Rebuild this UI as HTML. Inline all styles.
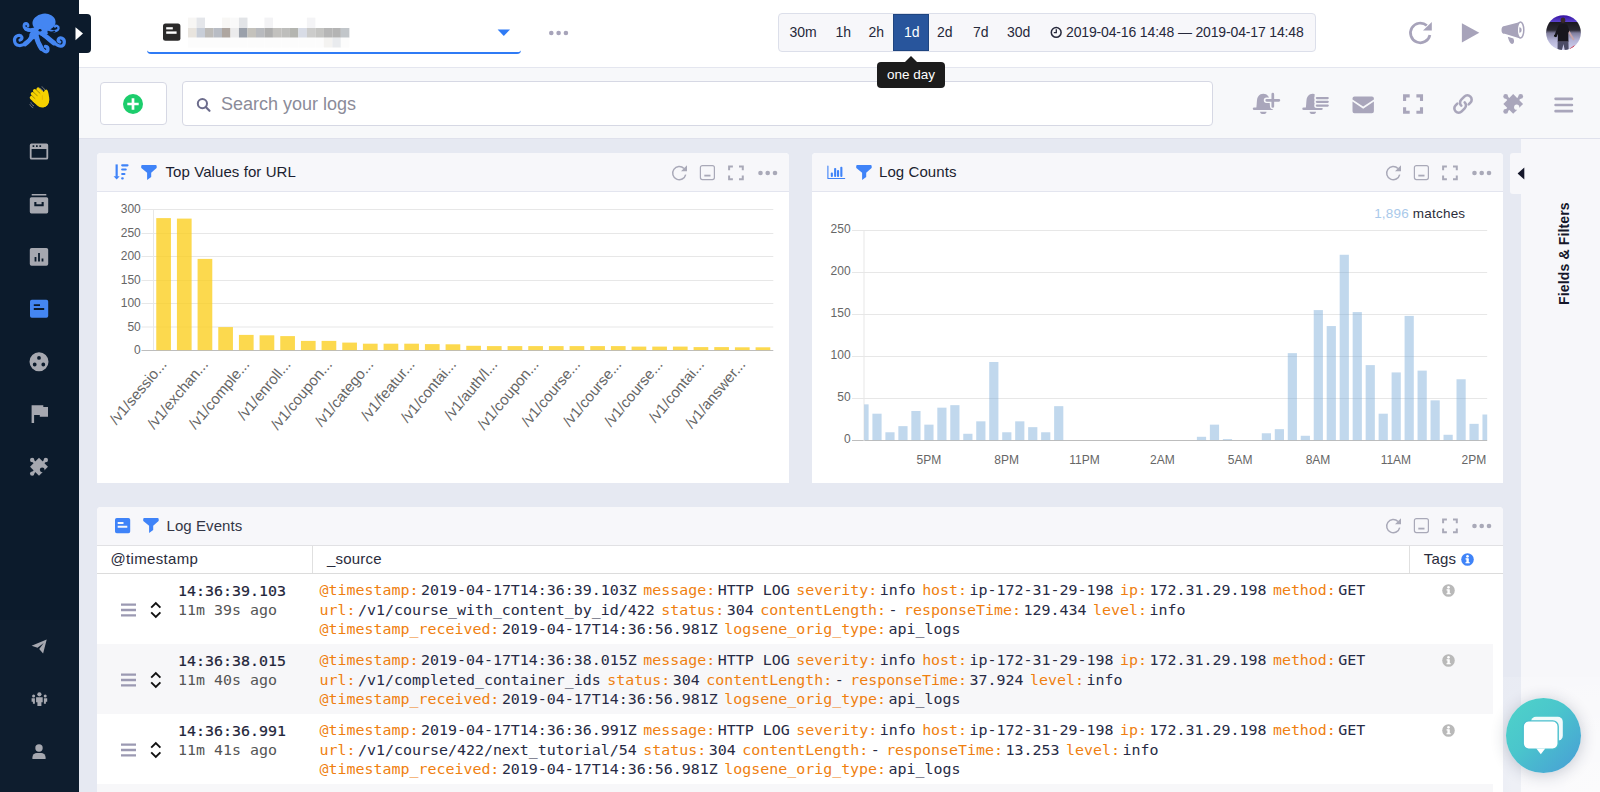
<!DOCTYPE html>
<html lang="en">
<head>
<meta charset="utf-8">
<title>Logs</title>
<style>
*{box-sizing:border-box;margin:0;padding:0}
html,body{width:1600px;height:792px;overflow:hidden}
body{font-family:"Liberation Sans",sans-serif;background:#e6e9f2;color:#1f2233;position:relative}
.abs{position:absolute}
#sidebar{position:absolute;left:0;top:0;width:79px;height:792px;background:#0c1b2c}
#sidetab{z-index:3;position:absolute;left:79px;top:14px;width:12px;height:39px;background:#0c1b2c;border-radius:0 4px 4px 0}
#header{position:absolute;left:79px;top:0;width:1521px;height:68px;background:#fff;border-bottom:1px solid #e4e6ef}
#toolbar{position:absolute;left:79px;top:68px;width:1521px;height:71px;background:#f7f8fa;border-bottom:1px solid #dfe1ec}
.panel{position:absolute;background:#fff;border-radius:4px 4px 0 0;overflow:hidden}
.phead{position:absolute;left:0;top:0;right:0;height:39px;background:#f7f7fa;border-bottom:1px solid #e3e5ef}
.ptitle{position:absolute;top:11px;font-size:15px;line-height:17px;letter-spacing:.08px;color:#1b1e30;white-space:nowrap}
svg{position:absolute;overflow:visible}
.tp{position:absolute;top:24px;font-size:14px;line-height:16px;color:#26283a;white-space:nowrap}
.mono{font-family:"DejaVu Sans Mono","Liberation Mono",monospace;font-size:14.95px;line-height:19.5px;white-space:nowrap}
.k{color:#ef7f10;margin-right:2.5px}
.v{color:#272b45;margin-right:6.5px}
.row{position:absolute;left:0;width:1396px}
.src{position:absolute;left:222.5px;top:7px}
.ts1{position:absolute;left:81px;top:7.500px;color:#23253a;-webkit-text-stroke:.2px #23253a}
.ts2{position:absolute;left:81px;top:26.500px;color:#555}
.th{font-size:15px;line-height:17px;letter-spacing:.2px;color:#2a2c3c;white-space:nowrap}
</style>
</head>
<body>
<div id="sidebar"><div style="position:absolute;left:0;top:620px;width:79px;height:172px;background:rgba(255,255,255,.012)"></div></div>
<div id="sidetab"></div>
<svg width="79" height="792" viewBox="0 0 79 792" style="left:0;top:0">
<!-- octopus logo -->
<g fill="none" stroke="#4486f2" stroke-linecap="round" stroke-linejoin="round">
<ellipse cx="44" cy="22.5" rx="11.6" ry="8.8" fill="#4486f2" stroke="none" transform="rotate(-8 44 22.5)"/>
<path d="M39 28 L33.500 35" stroke-width="8"/><path d="M33 35C31 39 28 42 25 44" stroke-width="4.600"/><path d="M36 35C37 40 39 45 41.500 48.500" stroke-width="4.800"/><path d="M41 33C46 36 50 40 54 43" stroke-width="4.800"/><path d="M34 29.500C31 30.500 28 30 26 29" stroke-width="3.800"/>
<path d="M42 30 L46 32" stroke-width="5"/>
<path d="M33 34 C30 40 25 46 19 45.5 C13.5 45 13 37 18 35.5 C22 34.5 23.5 39 20 40" stroke-width="3.2"/>
<path d="M33 30 C29 31 23.5 29 24 25.5 C24.5 22.5 28.5 23 28 26" stroke-width="2.8"/>
<path d="M35.5 35 C37.5 42 41 49.5 45 51.5 C48.5 53 49 47 45.5 46.5" stroke-width="3.4"/>
<path d="M41 33.5 C48 37.5 54 44.5 59.5 46 C65 47 66 39.5 61.5 38 C58 37 57 41 59.8 42" stroke-width="3.2"/>
<path d="M49 30 C52 32 57.5 32 58.5 28.5 C59 26 56 25 55 26.5" stroke-width="2.4"/>
</g>
<ellipse cx="40" cy="30.3" rx="1.5" ry="1.2" fill="#0c1b2c"/>
<path d="M47.5 31.5 C50 33 53.5 32.5 55 31" stroke="#0c1b2c" stroke-width="1.6" fill="none"/>
<!-- wave hand -->
<g transform="translate(39.800 97.800)">
<g transform="rotate(-46)">
<rect x="-7.400" y="-7.800" width="3.400" height="9" rx="1.700" fill="#f6d100"/>
<rect x="-3.800" y="-9.800" width="3.400" height="11" rx="1.700" fill="#f6d100"/>
<rect x="-.200" y="-10.300" width="3.400" height="11" rx="1.700" fill="#f6d100"/>
<rect x="3.400" y="-9" width="3.400" height="10" rx="1.700" fill="#f6d100"/>
<path d="M-7.400-3H6.800V3.500A7.100 7.100 0 0 1-7.400 3.500Z" fill="#f6d100"/>
<path d="M-3.900-8v6M-.300-8.500v6M3.300-8v6" stroke="#c9a600" stroke-width=".5"/>
</g>
<path d="M3-1.500C4-5.500 4.500-8.300 6.400-8.300 8.300-8.300 8.900-4 9.400 0 9.900 5 7 9 3 9.800Z" fill="#f6d100"/>
<path d="M2.600-2.500L2.600 2" stroke="#e0a800" stroke-width=".6"/>
<path d="M-.500-9.500C1.200-9.300 2.500-8 3-6.800M1.800-11C3.300-10.500 4.400-9.200 4.800-7.800" stroke="#7f8288" stroke-width=".9" fill="none"/>
<path d="M-9 4.500C-8.500 6.300-7.200 7.600-5.800 8.100M-10 6.500C-9.300 8.200-8 9.400-6.600 9.900" stroke="#7f8288" stroke-width=".9" fill="none"/>
</g>
<!-- window -->
<g fill="#a6a8b0">
<path fill-rule="evenodd" d="M31.5 143.5h15a1.7 1.7 0 0 1 1.7 1.7v12.7a1.7 1.7 0 0 1-1.7 1.7h-15a1.7 1.7 0 0 1-1.7-1.7v-12.7a1.7 1.7 0 0 1 1.7-1.7zM31.6 149v8.8h14.8V149zM32.6 145.2v1.7h1.7v-1.7zm3.4 0v1.7h1.7v-1.7zm3.4 0v1.7h1.7v-1.7z"/>
<!-- archive -->
<rect x="31.6" y="194" width="14.8" height="1.6" rx=".5"/>
<path fill-rule="evenodd" d="M31.4 197.2h15.2a1.6 1.6 0 0 1 1.6 1.6v13a1.6 1.6 0 0 1-1.6 1.6H31.4a1.6 1.6 0 0 1-1.6-1.6v-13a1.6 1.6 0 0 1 1.6-1.6zM34.3 202v4.3h9.4V202h-2.1v2.2h-5.2V202z"/>
<!-- chart -->
<path fill-rule="evenodd" d="M31.6 248h14.8a1.8 1.8 0 0 1 1.8 1.8v14.2a1.8 1.8 0 0 1-1.8 1.8H31.6a1.8 1.8 0 0 1-1.8-1.8v-14.2a1.8 1.8 0 0 1 1.8-1.8zM34.6 257v4.6h1.8V257zm3.5-4v8.6h1.8V253zm3.5 5.6v3h1.8v-3z"/>
<!-- palette -->
<path fill-rule="evenodd" d="M39 352.3a9.5 9.5 0 1 1 0 19a9.5 9.5 0 0 1 0-19zM39 356a1.9 1.9 0 1 0 0 3.8a1.9 1.9 0 0 0 0-3.8zm-4.3 6.6a1.9 1.9 0 1 0 0 3.8a1.9 1.9 0 0 0 0-3.8zm8.6 0a1.9 1.9 0 1 0 0 3.8a1.9 1.9 0 0 0 0-3.8z"/>
<!-- flag -->
<path d="M31.6 405.2h2.5v17.8h-2.5zM34.1 405.2h9.2l-.0 1.8h4.7v9.8h-8.2v-1.8h-5.7z"/>
<!-- puzzle -->
<g transform="translate(39 466.800) scale(.91)"><path d="M0-9.850L9.850 0 0 9.850-9.850 0z" fill="#a6a8b0"/><g stroke="#a6a8b0" stroke-width="2.800" fill="#a6a8b0"><path d="M-7.400-7.400L-4-4M7.400-7.400L4-4M-7.400 7.400L-4 4"/></g><circle cx="-7.500" cy="-7.500" r="2.400" fill="#a6a8b0"/><circle cx="7.500" cy="-7.500" r="2.400" fill="#a6a8b0"/><circle cx="-7.500" cy="7.500" r="2.400" fill="#a6a8b0"/><circle cx="3.500" cy="3.300" r="2.600" fill="#0c1b2c"/><path d="M3.800 3.600L7 6.800" stroke="#0c1b2c" stroke-width="2.600"/></g>
<!-- paper plane -->
<path d="M46.700 639.500l-3.600 13.900-3.900-4.300 4.500-6.200-6.200 4.800-5.900-1.900z"/>
<!-- team -->
<g>
<circle cx="39.4" cy="694.3" r="2.100"/>
<path d="M36.100 697.300h6.600v5h-1.300v3.700h-4v-3.700h-1.300z"/>
<circle cx="33.600" cy="696" r="1.500"/>
<path d="M31.600 698.300h3.300v5.500h-2v-2h-1.300z"/>
<circle cx="45.200" cy="696" r="1.500"/>
<path d="M43.900 698.300h3.300v3.500h-1.300v2h-2z"/>
</g>
<!-- user -->
<circle cx="39" cy="748" r="3.700"/>
<path d="M32.400 759v-1.500a4.500 4.500 0 0 1 4.500-4.500h4.200a4.500 4.500 0 0 1 4.500 4.500v1.500z"/>
</g>
<!-- logs active -->
<path fill="#4486f2" fill-rule="evenodd" d="M31.800 299.800h14.600a1.800 1.800 0 0 1 1.800 1.800v14.300a1.800 1.800 0 0 1-1.800 1.800H31.800a1.800 1.800 0 0 1-1.800-1.800v-14.300a1.800 1.800 0 0 1 1.800-1.800zM33.800 304.200v1.800h6.200v-1.800zm0 3.900v1.800h10.400v-1.800z"/>
<!-- side tab arrow -->
</svg>
<svg width="12" height="16" viewBox="0 0 12 16" style="left:75px;top:26px;z-index:4"><path d="M.5 1.200L8 7.600.5 14.200z" fill="#fff"/></svg>

<div id="header"></div>
<div id="toolbar"></div>

<!-- app select -->
<div class="abs" style="left:147px;top:14.500px;width:374px;height:39px;border-bottom:2px solid #2f7bf5;border-radius:0 0 4px 4px"></div>
<svg width="18" height="18" viewBox="0 0 18 18" style="left:163px;top:23px"><rect x="0" y="0.400" width="17.400" height="17.400" rx="2.500" fill="#2b2a2a"/><rect x="3.200" y="4.200" width="6.600" height="2.200" fill="#fff"/><rect x="3.200" y="8.400" width="10.400" height="2.400" fill="#fff"/></svg>
<svg width="164" height="32" viewBox="0 0 164 32" style="left:188px;top:17px" >
<g id="blur"><rect x="0.00" y="11" width="8.54" height="9.700" fill="#e8e4de"/><rect x="8.49" y="11" width="8.54" height="9.700" fill="#c8ced8"/><rect x="16.98" y="11" width="8.54" height="9.700" fill="#bdbbb8"/><rect x="25.47" y="11" width="8.54" height="9.700" fill="#b8bcc4"/><rect x="33.96" y="11" width="8.54" height="9.700" fill="#aea6a0"/><rect x="42.45" y="11" width="8.54" height="9.700" fill="#ebebec"/><rect x="50.94" y="11" width="8.54" height="9.700" fill="#9aa0aa"/><rect x="59.43" y="11" width="8.54" height="9.700" fill="#c4c2bc"/><rect x="67.92" y="11" width="8.54" height="9.700" fill="#b8babe"/><rect x="76.41" y="11" width="8.54" height="9.700" fill="#aeaeae"/><rect x="84.90" y="11" width="8.54" height="9.700" fill="#c2c1be"/><rect x="93.39" y="11" width="8.54" height="9.700" fill="#bebebc"/><rect x="101.88" y="11" width="8.54" height="9.700" fill="#b4b5b0"/><rect x="110.37" y="11" width="8.54" height="9.700" fill="#d8dce6"/><rect x="118.86" y="11" width="8.54" height="9.700" fill="#cccccb"/><rect x="127.35" y="11" width="8.54" height="9.700" fill="#c4c4c2"/><rect x="135.84" y="11" width="8.54" height="9.700" fill="#b6b6b6"/><rect x="144.33" y="11" width="8.54" height="9.700" fill="#b4b4b4"/><rect x="152.82" y="11" width="8.54" height="9.700" fill="#c2c6ca"/><rect x="0.00" y="0.600" width="8.54" height="10.400" fill="#f7f6f4"/><rect x="8.49" y="0.600" width="8.54" height="10.400" fill="#e4e6ea"/><rect x="33.96" y="0.600" width="8.54" height="10.400" fill="#f8f7f5"/><rect x="42.45" y="0.600" width="8.54" height="10.400" fill="#f9f9f9"/><rect x="50.94" y="0.600" width="8.54" height="10.400" fill="#e2e4e7"/><rect x="76.41" y="0.600" width="8.54" height="10.400" fill="#f3f3f5"/><rect x="118.86" y="0.600" width="8.54" height="10.400" fill="#f4f4f6"/><rect x="0.00" y="20.700" width="8.54" height="9.800" fill="#fcfcfc"/><rect x="8.49" y="20.700" width="8.54" height="9.800" fill="#fcfcfc"/><rect x="16.98" y="20.700" width="8.54" height="9.800" fill="#fcfcfc"/><rect x="25.47" y="20.700" width="8.54" height="9.800" fill="#fcfcfc"/><rect x="33.96" y="20.700" width="8.54" height="9.800" fill="#fcfcfc"/><rect x="42.45" y="20.700" width="8.54" height="9.800" fill="#fcfcfc"/><rect x="50.94" y="20.700" width="8.54" height="9.800" fill="#fcfcfc"/><rect x="59.43" y="20.700" width="8.54" height="9.800" fill="#fcfcfc"/><rect x="67.92" y="20.700" width="8.54" height="9.800" fill="#fcfcfc"/><rect x="76.41" y="20.700" width="8.54" height="9.800" fill="#fcfcfc"/><rect x="84.90" y="20.700" width="8.54" height="9.800" fill="#fcfcfc"/><rect x="93.39" y="20.700" width="8.54" height="9.800" fill="#fcfcfc"/><rect x="101.88" y="20.700" width="8.54" height="9.800" fill="#fcfcfc"/><rect x="110.37" y="20.700" width="8.54" height="9.800" fill="#fcfcfc"/><rect x="118.86" y="20.700" width="8.54" height="9.800" fill="#fcfcfc"/><rect x="127.35" y="20.700" width="8.54" height="9.800" fill="#fcfcfc"/><rect x="135.84" y="20.700" width="8.54" height="9.800" fill="#f4f3f1"/><rect x="144.33" y="20.700" width="8.54" height="9.800" fill="#e9ebee"/><rect x="152.82" y="20.700" width="8.54" height="9.800" fill="#fcfcfc"/></g>
</svg>
<svg width="14" height="8" viewBox="0 0 14 8" style="left:497px;top:29px"><path d="M.6.600h12.400L6.800 7z" fill="#2f7bf5"/></svg>
<svg width="22" height="6" viewBox="0 0 22 6" style="left:548px;top:30px"><circle cx="3.300" cy="3" r="2.300" fill="#a7a4ba"/><circle cx="10.600" cy="3" r="2.300" fill="#a7a4ba"/><circle cx="17.900" cy="3" r="2.300" fill="#a7a4ba"/></svg>
<!-- time picker -->
<div class="abs" style="left:778px;top:13px;width:538px;height:39px;background:#f7f7fa;border:1px solid #dcdfea;border-radius:4px"></div>
<div class="abs" style="left:893px;top:14px;width:36px;height:37px;background:#28559c;border:1px solid #1f4580"></div>
<div class="tp" style="left:789.500px">30m</div>
<div class="tp" style="left:835.500px">1h</div>
<div class="tp" style="left:868.500px">2h</div>
<div class="tp" style="left:904px;color:#fff">1d</div>
<div class="tp" style="left:937px">2d</div>
<div class="tp" style="left:973px">7d</div>
<div class="tp" style="left:1007px">30d</div>
<svg width="13" height="13" viewBox="0 0 13 13" style="left:1050px;top:25.500px"><circle cx="6.200" cy="6.400" r="4.900" fill="none" stroke="#26283a" stroke-width="1.500"/><path d="M6.300 3.300v3.400H3.800" fill="none" stroke="#26283a" stroke-width="1.300"/></svg>
<div class="tp" style="left:1066px;letter-spacing:-.15px">2019-04-16 14:48 — 2019-04-17 14:48</div>
<!-- tooltip -->
<svg width="14" height="7" viewBox="0 0 14 7" style="left:904px;top:56px"><path d="M0 7L7 0l7 7z" fill="#1c1c1c"/></svg>
<div class="abs" style="left:877px;top:62px;width:68px;height:26px;background:#1c1c1c;border-radius:4px;color:#fff;font-size:13.500px;line-height:26px;text-align:center;z-index:5">one day</div>
<!-- header right icons -->
<svg width="26" height="26" viewBox="0 0 26 26" style="left:1408px;top:20px"><path d="M18.800 5.600A9.800 9.800 0 1 0 21.900 14.900" fill="none" stroke="#a7a3ba" stroke-width="2.700"/><path d="M23.800 2v8.600H15z" fill="#a7a3ba"/></svg>
<svg width="20" height="22" viewBox="0 0 20 22" style="left:1461px;top:22px"><path d="M.900 1.200L18.300 10.700.900 20.600z" fill="#a7a3ba"/></svg>
<svg width="26" height="26" viewBox="0 0 26 26" style="left:1500px;top:20px"><path d="M4.700 6L20.200 1.900V18.500L4.700 13.800A3.200 3.900 0 0 1 4.700 6z" fill="#a7a3ba"/><ellipse cx="20.500" cy="10" rx="3.300" ry="8" fill="#fff" stroke="#a7a3ba" stroke-width="1.500"/><path d="M19.300 7.300A2.300 2.700 0 0 1 19.300 12.700z" fill="#a7a3ba"/><path d="M7.800 16.700L13.400 18.600C14.500 21 14.300 23.500 12.300 23.900 10.200 24.200 8.600 20.200 7.800 16.700z" fill="#a7a3ba"/></svg>
<!-- avatar -->
<svg width="36" height="36" viewBox="0 0 36 36" style="left:1545.800px;top:15px">
<defs><clipPath id="avc"><circle cx="17.500" cy="17.600" r="17.400"/></clipPath>
<linearGradient id="avg" x1="0" y1="0" x2="0" y2="1"><stop offset="0" stop-color="#3410a0"/><stop offset=".19" stop-color="#5b42cc"/><stop offset=".205" stop-color="#1b1920"/><stop offset=".42" stop-color="#2a2833"/><stop offset=".5" stop-color="#7f7d9c"/><stop offset=".7" stop-color="#b4b3d6"/><stop offset="1" stop-color="#d6d6f2"/></linearGradient></defs>
<g clip-path="url(#avc)"><rect width="36" height="36" fill="url(#avg)"/>
<path d="M23.600 33.800l5.300-3.800-2.600 4.600z" fill="#d02030"/>
<ellipse cx="17" cy="5.300" rx="2.300" ry="2.700" fill="#3a2a2a"/>
<path d="M21.500 16.500l1.800-1 5.200 9-1.400 1z" fill="#c9a3a6"/>
<path d="M13 9.800c2.500-1 6-1 8.200 0l2.300 6-1.300 2.200.3 8.700H11.700l.3-8-1.500 3.300-2.200-1 1.600-4.500z" fill="#18161d"/>
<path d="M11.700 26.500h10.700l.3 9h-3.900l-1.300-6.500-1.700 6.500h-4.300z" fill="#4c4c66"/>
<path d="M8.300 19.700l2.300 1-.6 1.500-2.200-.9z" fill="#111"/>
</g></svg>



<!-- toolbar -->
<div class="abs" style="left:100px;top:82px;width:67px;height:43px;background:#fff;border:1px solid #d6d8e4;border-radius:4px"></div>
<svg width="22" height="22" viewBox="0 0 22 22" style="left:122.300px;top:93px"><circle cx="11" cy="11" r="10" fill="#1ccd6c"/><path d="M11 5.300v11.400M5.300 11h11.400" stroke="#fff" stroke-width="2.700"/></svg>
<div class="abs" style="left:182px;top:81px;width:1030.500px;height:45px;background:#fff;border:1px solid #d6d8e4;border-radius:4px"></div>
<svg width="16" height="16" viewBox="0 0 16 16" style="left:195.700px;top:96.800px"><circle cx="6.400" cy="6.600" r="4.600" fill="none" stroke="#6c6c8c" stroke-width="2"/><path d="M9.700 10l3.800 3.800" stroke="#6c6c8c" stroke-width="2.200" stroke-linecap="round"/></svg>
<div class="abs" style="left:221px;top:94px;font-size:18px;line-height:21px;color:#8b8b99;white-space:nowrap">Search your logs</div>
<!-- bell plus -->
<svg width="30" height="22" viewBox="0 0 30 22" style="left:1252px;top:93px"><path d="M4.3 15C5.1 11 4.5 6 6.0 3.800C7.5 1.300 9.5 .700 11.3 .700C13.1 .700 15.1 1.300 16.6 3.800C18.1 6 17.5 11 18.3 15z" fill="#a9a6bb"/><rect x="0.8" y="14.400" width="20.400" height="2.600" rx="1.300" fill="#a9a6bb"/><path d="M8.1 18.700h6.400a3.200 2.400 0 0 1-6.400 0z" fill="#a9a6bb"/><path d="M20.800 1v12.600M14.500 7.300h12.600" stroke="#f7f8fa" stroke-width="5.400" stroke-linecap="round"/><path d="M20.800 1.200v12.200M14.700 7.300h12.200" stroke="#a9a6bb" stroke-width="2.700" stroke-linecap="round"/></svg>
<!-- bell lines -->
<svg width="30" height="22" viewBox="0 0 30 22" style="left:1302px;top:93px"><path d="M3.8 15C4.6 11 4.0 6 5.5 3.800C7.0 1.300 9.0 .700 10.8 .700C12.6 .700 14.6 1.300 16.1 3.800C17.6 6 17.0 11 17.8 15z" fill="#a9a6bb"/><rect x="0.3" y="14.400" width="20.400" height="2.600" rx="1.300" fill="#a9a6bb"/><path d="M7.6 18.700h6.400a3.200 2.400 0 0 1-6.400 0z" fill="#a9a6bb"/><rect x="12.600" y="0" width="16" height="14.300" fill="#f7f8fa"/><path d="M14.900 5.100h10.800M14.900 8.800h10.800M14.900 12.600h10.800" stroke="#f7f8fa" stroke-width="5" stroke-linecap="round"/><path d="M14.900 5.100h10.800M14.900 8.800h10.800M14.900 12.600h10.800" stroke="#a9a6bb" stroke-width="2.300" stroke-linecap="round"/></svg>
<!-- envelope -->
<svg width="24" height="18" viewBox="0 0 24 18" style="left:1351.500px;top:96px"><path d="M2.500.600h17.400a2 2 0 0 1 2 2v.8l-10.700 7.200L.5 3.400v-.8a2 2 0 0 1 2-2z" fill="#a9a6bb"/><path d="M.5 5.600l10.700 7.100 10.700-7.100v9.700a2 2 0 0 1-2 2H2.500a2 2 0 0 1-2-2z" fill="#a9a6bb"/></svg>
<!-- expand -->
<svg width="22" height="22" viewBox="0 0 22 22" style="left:1402px;top:93px"><path d="M2.600 8V2.900h5.100M14.400 2.900h5.100V8M19.500 14.200v5.100h-5.100M7.700 19.300H2.600v-5.100" fill="none" stroke="#a9a6bb" stroke-width="3.100"/></svg>
<!-- link -->
<svg width="22" height="22" viewBox="0 0 22 22" style="left:1452px;top:93px"><g fill="none" stroke="#a9a6bb" stroke-width="2.600" stroke-linecap="round"><path d="M9.300 12.700a4.300 4.300 0 0 1 0-6.100l3-3a4.300 4.300 0 0 1 6.100 6.100l-1.700 1.700"/><path d="M12.700 9.300a4.300 4.300 0 0 1 0 6.100l-3 3a4.300 4.300 0 0 1-6.100-6.100l1.700-1.700"/></g></svg>
<!-- puzzle -->
<svg width="24" height="24" viewBox="0 0 24 24" style="left:1501px;top:92px"><g transform="translate(12.200 11.900)"><path d="M0-9.850L9.850 0 0 9.850-9.850 0z" fill="#a9a6bb"/><g stroke="#a9a6bb" stroke-width="2.800" fill="#a9a6bb"><path d="M-7.400-7.400L-4-4M7.400-7.400L4-4M-7.400 7.400L-4 4"/></g><circle cx="-7.500" cy="-7.500" r="2.400" fill="#a9a6bb"/><circle cx="7.500" cy="-7.500" r="2.400" fill="#a9a6bb"/><circle cx="-7.500" cy="7.500" r="2.400" fill="#a9a6bb"/><circle cx="3.500" cy="3.300" r="2.600" fill="#f7f8fa"/><path d="M3.800 3.600L7 6.800" stroke="#f7f8fa" stroke-width="2.600"/></g></svg>
<!-- hamburger -->
<svg width="20" height="16" viewBox="0 0 20 16" style="left:1553.500px;top:96.500px"><path d="M1.600 1.800h16.300M1.600 8h16.300M1.600 14.200h16.300" stroke="#a9a6bb" stroke-width="2.700" stroke-linecap="round"/></svg>

<div class="panel" id="p1" style="left:97px;top:153px;width:692px;height:330px"><div class="phead"></div></div>
<div class="panel" id="p2" style="left:812px;top:153px;width:691px;height:330px"><div class="phead"></div></div>
<div class="panel" id="p3" style="left:97px;top:507px;width:1406px;height:300px"><div class="phead" style="border-bottom-color:#e1e1e4"></div></div>
<div id="rightpanel" class="abs" style="left:1521px;top:139px;width:79px;height:653px;background:#f7f7fa"></div>
<div id="righttab" class="abs" style="left:1510px;top:152.500px;width:12px;height:41px;background:#f7f7fa;border-radius:3px 0 0 3px"></div>
<svg width="17" height="17" viewBox="0 0 17 17" style="left:113px;top:163.300px"><path d="M3.650 1.400v12.400" stroke="#3f83f8" stroke-width="2.200"/><path d="M.600 13.200h6.100l-3.050 3.200z" fill="#3f83f8"/><path d="M9.200 2.300h5.300M9.200 6.500h3.500M9.200 11h2.200M9.200 15.400h.5" stroke="#3f83f8" stroke-width="2.200" stroke-linecap="round"/></svg><svg width="16" height="16" viewBox="0 0 16 16" style="left:141px;top:165px"><path d="M1.3 .1H14.6a1.1 1.1 0 0 1 1.1 1.1V2.4a1.2 1.2 0 0 1-.4 .8L10.2 7.8V12L6.1 15.1V7.8L.6 3.2A1.2 1.2 0 0 1 .2 2.4V1.2A1.1 1.1 0 0 1 1.3 .1z" fill="#3f83f8"/></svg><div class="ptitle abs" style="left:165.500px;top:163.400px">Top Values for URL</div><svg width="108" height="18" viewBox="0 0 108 18" style="left:671px;top:163.5px">
<path d="M13 4.500A6.600 6.600 0 1 0 14.700 10.600" fill="none" stroke="#a9a9b8" stroke-width="1.500"/><path d="M16 1.200v6h-6z" fill="#a9a9b8"/>
<rect x="29.400" y="1.600" width="14" height="14" rx="2" fill="none" stroke="#a9a9b8" stroke-width="1.200"/><path d="M33.300 11.600h6.200" stroke="#a9a9b8" stroke-width="1.800"/>
<path d="M58.100 6.200V2.400h3.800M68 2.400h3.800v3.800M71.800 11.500v3.800H68M61.900 15.300h-3.800v-3.800" fill="none" stroke="#a9a9b8" stroke-width="2"/>
<circle cx="89.500" cy="9" r="2.300" fill="#a9a9b8"/><circle cx="96.700" cy="9" r="2.300" fill="#a9a9b8"/><circle cx="104" cy="9" r="2.300" fill="#a9a9b8"/>
</svg><svg width="19" height="15" viewBox="0 0 19 15" style="left:827px;top:165px"><path d="M.9 1V13.5H17.7" fill="none" stroke="#3f83f8" stroke-width="1.1" stroke-linecap="round" stroke-linejoin="round"/><g fill="#3f83f8"><rect x="3.800" y="7.600" width="2.100" height="4.400" rx=".9"/><rect x="7.100" y="2.900" width="2.100" height="9.100" rx=".9"/><rect x="10" y="5.100" width="2.100" height="6.900" rx=".9"/><rect x="13.300" y="1.800" width="2.100" height="10.200" rx=".9"/></g></svg><svg width="16" height="16" viewBox="0 0 16 16" style="left:856px;top:165px"><path d="M1.3 .1H14.6a1.1 1.1 0 0 1 1.1 1.1V2.4a1.2 1.2 0 0 1-.4 .8L10.2 7.8V12L6.1 15.1V7.8L.6 3.2A1.2 1.2 0 0 1 .2 2.4V1.2A1.1 1.1 0 0 1 1.3 .1z" fill="#3f83f8"/></svg><div class="ptitle abs" style="left:879px;top:163.400px">Log Counts</div><svg width="108" height="18" viewBox="0 0 108 18" style="left:1385px;top:163.5px">
<path d="M13 4.500A6.600 6.600 0 1 0 14.700 10.600" fill="none" stroke="#a9a9b8" stroke-width="1.500"/><path d="M16 1.200v6h-6z" fill="#a9a9b8"/>
<rect x="29.400" y="1.600" width="14" height="14" rx="2" fill="none" stroke="#a9a9b8" stroke-width="1.200"/><path d="M33.300 11.600h6.200" stroke="#a9a9b8" stroke-width="1.800"/>
<path d="M58.100 6.200V2.400h3.800M68 2.400h3.800v3.800M71.800 11.500v3.800H68M61.900 15.300h-3.800v-3.800" fill="none" stroke="#a9a9b8" stroke-width="2"/>
<circle cx="89.500" cy="9" r="2.300" fill="#a9a9b8"/><circle cx="96.700" cy="9" r="2.300" fill="#a9a9b8"/><circle cx="104" cy="9" r="2.300" fill="#a9a9b8"/>
</svg><svg width="16" height="16" viewBox="0 0 16 16" style="left:114.800px;top:517.800px"><path fill-rule="evenodd" fill="#3f83f8" d="M1.800 0h11.600a1.800 1.800 0 0 1 1.800 1.800v11.600a1.800 1.800 0 0 1-1.800 1.800H1.800a1.800 1.800 0 0 1-1.800-1.800V1.800A1.800 1.800 0 0 1 1.800 0zM2.700 3.900v2h5.800v-2zm0 3.800v2h9.600v-2z"/></svg><svg width="16" height="16" viewBox="0 0 16 16" style="left:143px;top:518px"><path d="M1.3 .1H14.6a1.1 1.1 0 0 1 1.1 1.1V2.4a1.2 1.2 0 0 1-.4 .8L10.2 7.8V12L6.1 15.1V7.8L.6 3.2A1.2 1.2 0 0 1 .2 2.4V1.2A1.1 1.1 0 0 1 1.3 .1z" fill="#3f83f8"/></svg><div class="ptitle abs" style="left:166.500px;top:517px;color:#333646">Log Events</div><svg width="108" height="18" viewBox="0 0 108 18" style="left:1385px;top:517.2px">
<path d="M13 4.500A6.600 6.600 0 1 0 14.700 10.600" fill="none" stroke="#a9a9b8" stroke-width="1.500"/><path d="M16 1.200v6h-6z" fill="#a9a9b8"/>
<rect x="29.400" y="1.600" width="14" height="14" rx="2" fill="none" stroke="#a9a9b8" stroke-width="1.200"/><path d="M33.300 11.600h6.200" stroke="#a9a9b8" stroke-width="1.800"/>
<path d="M58.100 6.200V2.400h3.800M68 2.400h3.800v3.800M71.800 11.500v3.800H68M61.900 15.300h-3.800v-3.800" fill="none" stroke="#a9a9b8" stroke-width="2"/>
<circle cx="89.500" cy="9" r="2.300" fill="#a9a9b8"/><circle cx="96.700" cy="9" r="2.300" fill="#a9a9b8"/><circle cx="104" cy="9" r="2.300" fill="#a9a9b8"/>
</svg><svg width="8" height="13" viewBox="0 0 8 13" style="left:1517px;top:166.500px"><path d="M7.300.400v12L.600 6.400z" fill="#15172a"/></svg>
<div class="abs" style="left:1554.300px;top:204.600px;width:20px;height:100px"><div style="position:absolute;left:0;top:100px;width:100px;height:20px;transform-origin:0 0;transform:rotate(-90deg);font-size:14px;font-weight:700;letter-spacing:.15px;line-height:20px;color:#15172a;white-space:nowrap;text-align:left">Fields &amp; Filters</div></div>

<svg width="1600" height="500" viewBox="0 0 1600 500" style="left:0;top:0" font-family="Liberation Sans, sans-serif">
<path d="M141.500 209.5H773.300" stroke="#e7e7e7" stroke-width="1"/><text x="140.800" y="213.1" font-size="12" fill="#666" text-anchor="end">300</text><path d="M141.500 233.5H773.300" stroke="#e7e7e7" stroke-width="1"/><text x="140.800" y="237.1" font-size="12" fill="#666" text-anchor="end">250</text><path d="M141.500 256.5H773.300" stroke="#e7e7e7" stroke-width="1"/><text x="140.800" y="260.1" font-size="12" fill="#666" text-anchor="end">200</text><path d="M141.500 280.5H773.300" stroke="#e7e7e7" stroke-width="1"/><text x="140.800" y="284.1" font-size="12" fill="#666" text-anchor="end">150</text><path d="M141.500 303.5H773.300" stroke="#e7e7e7" stroke-width="1"/><text x="140.800" y="307.1" font-size="12" fill="#666" text-anchor="end">100</text><path d="M141.500 327.0H773.300" stroke="#e7e7e7" stroke-width="1"/><text x="140.800" y="330.6" font-size="12" fill="#666" text-anchor="end">50</text><path d="M141.500 350.5H773.300" stroke="#bdbdbd" stroke-width="1"/><text x="140.800" y="354.1" font-size="12" fill="#666" text-anchor="end">0</text><path d="M153.500 209V350" stroke="#e7e7e7" stroke-width="1"/>
<rect x="156.25" y="218.10" width="14.700" height="132.00" fill="rgba(251,207,34,.8)"/><rect x="176.92" y="218.60" width="14.700" height="131.50" fill="rgba(251,207,34,.8)"/><rect x="197.58" y="258.90" width="14.700" height="91.20" fill="rgba(251,207,34,.8)"/><rect x="218.25" y="327.10" width="14.700" height="23.00" fill="rgba(251,207,34,.8)"/><rect x="238.92" y="334.90" width="14.700" height="15.20" fill="rgba(251,207,34,.8)"/><rect x="259.58" y="335.30" width="14.700" height="14.80" fill="rgba(251,207,34,.8)"/><rect x="280.25" y="336.10" width="14.700" height="14.00" fill="rgba(251,207,34,.8)"/><rect x="300.92" y="340.90" width="14.700" height="9.20" fill="rgba(251,207,34,.8)"/><rect x="321.58" y="340.90" width="14.700" height="9.20" fill="rgba(251,207,34,.8)"/><rect x="342.25" y="342.60" width="14.700" height="7.50" fill="rgba(251,207,34,.8)"/><rect x="362.92" y="343.70" width="14.700" height="6.40" fill="rgba(251,207,34,.8)"/><rect x="383.58" y="343.70" width="14.700" height="6.40" fill="rgba(251,207,34,.8)"/><rect x="404.25" y="343.70" width="14.700" height="6.40" fill="rgba(251,207,34,.8)"/><rect x="424.92" y="344.10" width="14.700" height="6.00" fill="rgba(251,207,34,.8)"/><rect x="445.58" y="344.30" width="14.700" height="5.80" fill="rgba(251,207,34,.8)"/><rect x="466.25" y="345.80" width="14.700" height="4.30" fill="rgba(251,207,34,.8)"/><rect x="486.92" y="346.10" width="14.700" height="4.00" fill="rgba(251,207,34,.8)"/><rect x="507.58" y="346.10" width="14.700" height="4.00" fill="rgba(251,207,34,.8)"/><rect x="528.25" y="346.10" width="14.700" height="4.00" fill="rgba(251,207,34,.8)"/><rect x="548.92" y="346.10" width="14.700" height="4.00" fill="rgba(251,207,34,.8)"/><rect x="569.58" y="346.10" width="14.700" height="4.00" fill="rgba(251,207,34,.8)"/><rect x="590.25" y="346.10" width="14.700" height="4.00" fill="rgba(251,207,34,.8)"/><rect x="610.92" y="346.10" width="14.700" height="4.00" fill="rgba(251,207,34,.8)"/><rect x="631.58" y="346.60" width="14.700" height="3.50" fill="rgba(251,207,34,.8)"/><rect x="652.25" y="346.60" width="14.700" height="3.50" fill="rgba(251,207,34,.8)"/><rect x="672.92" y="346.60" width="14.700" height="3.50" fill="rgba(251,207,34,.8)"/><rect x="693.58" y="347.10" width="14.700" height="3.00" fill="rgba(251,207,34,.8)"/><rect x="714.25" y="347.10" width="14.700" height="3.00" fill="rgba(251,207,34,.8)"/><rect x="734.92" y="347.30" width="14.700" height="2.80" fill="rgba(251,207,34,.8)"/><rect x="755.58" y="347.30" width="14.700" height="2.80" fill="rgba(251,207,34,.8)"/>
<text transform="translate(163.53 361.5) rotate(-50)" font-size="15" fill="#666" text-anchor="end" dy="5.200">/v1/sessio...</text><text transform="translate(204.87 361.5) rotate(-50)" font-size="15" fill="#666" text-anchor="end" dy="5.200">/v1/exchan...</text><text transform="translate(246.20 361.5) rotate(-50)" font-size="15" fill="#666" text-anchor="end" dy="5.200">/v1/comple...</text><text transform="translate(287.53 361.5) rotate(-50)" font-size="15" fill="#666" text-anchor="end" dy="5.200">/v1/enroll...</text><text transform="translate(328.87 361.5) rotate(-50)" font-size="15" fill="#666" text-anchor="end" dy="5.200">/v1/coupon...</text><text transform="translate(370.20 361.5) rotate(-50)" font-size="15" fill="#666" text-anchor="end" dy="5.200">/v1/catego...</text><text transform="translate(411.53 361.5) rotate(-50)" font-size="15" fill="#666" text-anchor="end" dy="5.200">/v1/featur...</text><text transform="translate(452.87 361.5) rotate(-50)" font-size="15" fill="#666" text-anchor="end" dy="5.200">/v1/contai...</text><text transform="translate(494.20 361.5) rotate(-50)" font-size="15" fill="#666" text-anchor="end" dy="5.200">/v1/auth/l...</text><text transform="translate(535.53 361.5) rotate(-50)" font-size="15" fill="#666" text-anchor="end" dy="5.200">/v1/coupon...</text><text transform="translate(576.87 361.5) rotate(-50)" font-size="15" fill="#666" text-anchor="end" dy="5.200">/v1/course...</text><text transform="translate(618.20 361.5) rotate(-50)" font-size="15" fill="#666" text-anchor="end" dy="5.200">/v1/course...</text><text transform="translate(659.53 361.5) rotate(-50)" font-size="15" fill="#666" text-anchor="end" dy="5.200">/v1/course...</text><text transform="translate(700.87 361.5) rotate(-50)" font-size="15" fill="#666" text-anchor="end" dy="5.200">/v1/contai...</text><text transform="translate(742.20 361.5) rotate(-50)" font-size="15" fill="#666" text-anchor="end" dy="5.200">/v1/answer...</text>
<path d="M852 230.5H1487.200" stroke="#e7e7e7" stroke-width="1"/><text x="850.600" y="233.0" font-size="12" fill="#666" text-anchor="end">250</text><path d="M852 272.5H1487.200" stroke="#e7e7e7" stroke-width="1"/><text x="850.600" y="275.0" font-size="12" fill="#666" text-anchor="end">200</text><path d="M852 314.5H1487.200" stroke="#e7e7e7" stroke-width="1"/><text x="850.600" y="317.0" font-size="12" fill="#666" text-anchor="end">150</text><path d="M852 356.5H1487.200" stroke="#e7e7e7" stroke-width="1"/><text x="850.600" y="359.0" font-size="12" fill="#666" text-anchor="end">100</text><path d="M852 398.5H1487.200" stroke="#e7e7e7" stroke-width="1"/><text x="850.600" y="401.0" font-size="12" fill="#666" text-anchor="end">50</text><path d="M852 440.5H1487.200" stroke="#bdbdbd" stroke-width="1"/><text x="850.600" y="443.0" font-size="12" fill="#666" text-anchor="end">0</text><path d="M864 230V441" stroke="#e7e7e7" stroke-width="1"/>
<clipPath id="c2"><rect x="864.200" y="200" width="623" height="241"/></clipPath><g clip-path="url(#c2)" fill="rgba(118,168,214,0.45)"><rect x="859.42" y="404.36" width="9.200" height="35.74"/><rect x="872.40" y="413.69" width="9.200" height="26.41"/><rect x="885.38" y="432.27" width="9.200" height="7.83"/><rect x="898.36" y="426.14" width="9.200" height="13.96"/><rect x="911.34" y="410.98" width="9.200" height="29.12"/><rect x="924.32" y="424.64" width="9.200" height="15.46"/><rect x="937.30" y="407.67" width="9.200" height="32.43"/><rect x="950.28" y="405.16" width="9.200" height="34.94"/><rect x="963.26" y="433.77" width="9.200" height="6.33"/><rect x="976.24" y="421.33" width="9.200" height="18.77"/><rect x="989.22" y="361.99" width="9.200" height="78.11"/><rect x="1002.20" y="432.27" width="9.200" height="7.83"/><rect x="1015.18" y="421.33" width="9.200" height="18.77"/><rect x="1028.16" y="427.15" width="9.200" height="12.95"/><rect x="1041.14" y="432.27" width="9.200" height="7.83"/><rect x="1054.12" y="406.16" width="9.200" height="33.94"/><rect x="1196.90" y="436.79" width="9.200" height="3.31"/><rect x="1209.88" y="424.64" width="9.200" height="15.46"/><rect x="1222.86" y="439.10" width="9.200" height="1.00"/><rect x="1261.80" y="433.27" width="9.200" height="6.83"/><rect x="1274.78" y="429.16" width="9.200" height="10.94"/><rect x="1287.76" y="353.15" width="9.200" height="86.95"/><rect x="1300.74" y="435.78" width="9.200" height="4.32"/><rect x="1313.72" y="310.08" width="9.200" height="130.02"/><rect x="1326.70" y="326.05" width="9.200" height="114.05"/><rect x="1339.68" y="254.76" width="9.200" height="185.34"/><rect x="1352.66" y="312.09" width="9.200" height="128.01"/><rect x="1365.64" y="365.10" width="9.200" height="75.00"/><rect x="1378.62" y="413.69" width="9.200" height="26.41"/><rect x="1391.60" y="372.43" width="9.200" height="67.67"/><rect x="1404.58" y="315.91" width="9.200" height="124.19"/><rect x="1417.56" y="370.62" width="9.200" height="69.48"/><rect x="1430.54" y="400.34" width="9.200" height="39.76"/><rect x="1443.52" y="434.78" width="9.200" height="5.32"/><rect x="1456.50" y="379.26" width="9.200" height="60.84"/><rect x="1469.48" y="423.84" width="9.200" height="16.26"/><rect x="1482.46" y="414.50" width="9.200" height="25.60"/></g>
<text x="928.8" y="464" font-size="12" fill="#666" text-anchor="middle">5PM</text><text x="1006.6" y="464" font-size="12" fill="#666" text-anchor="middle">8PM</text><text x="1084.5" y="464" font-size="12" fill="#666" text-anchor="middle">11PM</text><text x="1162.3" y="464" font-size="12" fill="#666" text-anchor="middle">2AM</text><text x="1240.2" y="464" font-size="12" fill="#666" text-anchor="middle">5AM</text><text x="1318.0" y="464" font-size="12" fill="#666" text-anchor="middle">8AM</text><text x="1395.9" y="464" font-size="12" fill="#666" text-anchor="middle">11AM</text><text x="1473.8" y="464" font-size="12" fill="#666" text-anchor="middle">2PM</text>
<text x="1465.300" y="218.400" font-size="13.500" letter-spacing=".2" text-anchor="end"><tspan fill="#a9c9ea">1,896</tspan><tspan fill="#2b2d3a"> matches</tspan></text>
</svg>
<!-- log events table -->
<div class="abs" style="left:97px;top:546px;width:1406px;height:28px;background:#fff;border-bottom:1px solid #dcdcdc"></div>
<div class="abs" style="left:312px;top:546px;width:1px;height:27px;background:#e0e0e0"></div>
<div class="abs" style="left:1408.500px;top:546px;width:1px;height:27px;background:#e0e0e0"></div>
<div class="abs th" style="left:110.500px;top:550.400px;letter-spacing:.32px">@timestamp</div>
<div class="abs th" style="left:327px;top:550.400px">_source</div>
<div class="abs th" style="left:1423.800px;top:550.400px">Tags</div>
<svg width="13" height="13" viewBox="0 0 13 13" style="left:1461px;top:553.100px"><circle cx="6.500" cy="6.500" r="6.300" fill="#3f83f8"/><rect x="5.400" y="5.300" width="2.400" height="4.700" fill="#fff"/><rect x="4.500" y="5.300" width="2" height="1.200" fill="#fff"/><rect x="4.500" y="9.100" width="4.200" height="1.200" fill="#fff"/><circle cx="6.500" cy="3.300" r="1.350" fill="#fff"/></svg>
<div class="row" style="left:97px;top:574px;height:70px;background:#fff"><svg width="16" height="14" viewBox="0 0 16 14" style="left:24px;top:29px"><path d="M0 1.700h15M0 7h15M0 12.300h15" stroke="#9b99b2" stroke-width="2.300"/></svg><svg width="12" height="18" viewBox="0 0 12 18" style="left:53px;top:27px"><path d="M1.200 6.600L5.800 2l4.600 4.600M1.200 11.400L5.800 16l4.600-4.600" fill="none" stroke="#111" stroke-width="1.900"/></svg><div class="mono ts1">14:36:39.103</div><div class="mono ts2">11m 39s ago</div><div class="mono src"><div><span class="k">@timestamp:</span><span class="v">2019-04-17T14:36:39.103Z</span><span class="k">message:</span><span class="v">HTTP LOG</span><span class="k">severity:</span><span class="v">info</span><span class="k">host:</span><span class="v">ip-172-31-29-198</span><span class="k">ip:</span><span class="v">172.31.29.198</span><span class="k">method:</span><span class="v">GET</span></div><div><span class="k">url:</span><span class="v">/v1/course_with_content_by_id/422</span><span class="k">status:</span><span class="v">304</span><span class="k">contentLength:</span><span class="v">-</span><span class="k">responseTime:</span><span class="v">129.434</span><span class="k">level:</span><span class="v">info</span></div><div><span class="k">@timestamp_received:</span><span class="v">2019-04-17T14:36:56.981Z</span><span class="k">logsene_orig_type:</span><span class="v">api_logs</span></div></div><svg width="13" height="13" viewBox="0 0 13 13" style="left:1344.600px;top:9.900px"><circle cx="6.500" cy="6.500" r="6.300" fill="#b9b9b9"/><rect x="5.400" y="5.300" width="2.400" height="4.700" fill="#fff"/><rect x="4.500" y="5.300" width="2" height="1.200" fill="#fff"/><rect x="4.500" y="9.100" width="4.200" height="1.200" fill="#fff"/><circle cx="6.500" cy="3.300" r="1.350" fill="#fff"/></svg></div>
<div class="row" style="left:97px;top:644px;height:70px;background:#f7f7f9"><svg width="16" height="14" viewBox="0 0 16 14" style="left:24px;top:29px"><path d="M0 1.700h15M0 7h15M0 12.300h15" stroke="#9b99b2" stroke-width="2.300"/></svg><svg width="12" height="18" viewBox="0 0 12 18" style="left:53px;top:27px"><path d="M1.200 6.600L5.800 2l4.600 4.600M1.200 11.400L5.800 16l4.600-4.600" fill="none" stroke="#111" stroke-width="1.900"/></svg><div class="mono ts1">14:36:38.015</div><div class="mono ts2">11m 40s ago</div><div class="mono src"><div><span class="k">@timestamp:</span><span class="v">2019-04-17T14:36:38.015Z</span><span class="k">message:</span><span class="v">HTTP LOG</span><span class="k">severity:</span><span class="v">info</span><span class="k">host:</span><span class="v">ip-172-31-29-198</span><span class="k">ip:</span><span class="v">172.31.29.198</span><span class="k">method:</span><span class="v">GET</span></div><div><span class="k">url:</span><span class="v">/v1/completed_container_ids</span><span class="k">status:</span><span class="v">304</span><span class="k">contentLength:</span><span class="v">-</span><span class="k">responseTime:</span><span class="v">37.924</span><span class="k">level:</span><span class="v">info</span></div><div><span class="k">@timestamp_received:</span><span class="v">2019-04-17T14:36:56.981Z</span><span class="k">logsene_orig_type:</span><span class="v">api_logs</span></div></div><svg width="13" height="13" viewBox="0 0 13 13" style="left:1344.600px;top:9.900px"><circle cx="6.500" cy="6.500" r="6.300" fill="#b9b9b9"/><rect x="5.400" y="5.300" width="2.400" height="4.700" fill="#fff"/><rect x="4.500" y="5.300" width="2" height="1.200" fill="#fff"/><rect x="4.500" y="9.100" width="4.200" height="1.200" fill="#fff"/><circle cx="6.500" cy="3.300" r="1.350" fill="#fff"/></svg></div>
<div class="row" style="left:97px;top:714px;height:70px;background:#fff"><svg width="16" height="14" viewBox="0 0 16 14" style="left:24px;top:29px"><path d="M0 1.700h15M0 7h15M0 12.300h15" stroke="#9b99b2" stroke-width="2.300"/></svg><svg width="12" height="18" viewBox="0 0 12 18" style="left:53px;top:27px"><path d="M1.200 6.600L5.800 2l4.600 4.600M1.200 11.400L5.800 16l4.600-4.600" fill="none" stroke="#111" stroke-width="1.900"/></svg><div class="mono ts1">14:36:36.991</div><div class="mono ts2">11m 41s ago</div><div class="mono src"><div><span class="k">@timestamp:</span><span class="v">2019-04-17T14:36:36.991Z</span><span class="k">message:</span><span class="v">HTTP LOG</span><span class="k">severity:</span><span class="v">info</span><span class="k">host:</span><span class="v">ip-172-31-29-198</span><span class="k">ip:</span><span class="v">172.31.29.198</span><span class="k">method:</span><span class="v">GET</span></div><div><span class="k">url:</span><span class="v">/v1/course/422/next_tutorial/54</span><span class="k">status:</span><span class="v">304</span><span class="k">contentLength:</span><span class="v">-</span><span class="k">responseTime:</span><span class="v">13.253</span><span class="k">level:</span><span class="v">info</span></div><div><span class="k">@timestamp_received:</span><span class="v">2019-04-17T14:36:56.981Z</span><span class="k">logsene_orig_type:</span><span class="v">api_logs</span></div></div><svg width="13" height="13" viewBox="0 0 13 13" style="left:1344.600px;top:9.900px"><circle cx="6.500" cy="6.500" r="6.300" fill="#b9b9b9"/><rect x="5.400" y="5.300" width="2.400" height="4.700" fill="#fff"/><rect x="4.500" y="5.300" width="2" height="1.200" fill="#fff"/><rect x="4.500" y="9.100" width="4.200" height="1.200" fill="#fff"/><circle cx="6.500" cy="3.300" r="1.350" fill="#fff"/></svg></div>
<div class="row" style="left:97px;top:784px;height:10px;background:#f7f7f9"></div>
<div class="abs" style="left:1494px;top:677px;width:106px;height:115px;background:radial-gradient(ellipse 150px 125px at 100% 100%,rgba(255,255,255,.5) 0,rgba(255,255,255,.38) 45%,rgba(255,255,255,.12) 100%)"></div>
<div class="abs" style="left:1505.800px;top:697.600px;width:75.200px;height:75.200px;border-radius:50%;background:linear-gradient(135deg,#4fd3c9 0%,#4ac6cc 42%,#489cd6 100%);box-shadow:0 2px 16px rgba(30,40,70,.24)"></div>
<svg width="44" height="42" viewBox="0 0 44 42" style="left:1521px;top:714px"><rect x="10" y="2.800" width="31.800" height="24" rx="5" fill="#fff" opacity=".92"/><rect x="2.200" y="6.900" width="35" height="28.200" rx="5.500" fill="#fff" stroke="#4abfcd" stroke-width="1.400"/><path d="M15.300 34.400l4.500 5.800 4.500-5.800z" fill="#fff"/></svg>
</body>
</html>
